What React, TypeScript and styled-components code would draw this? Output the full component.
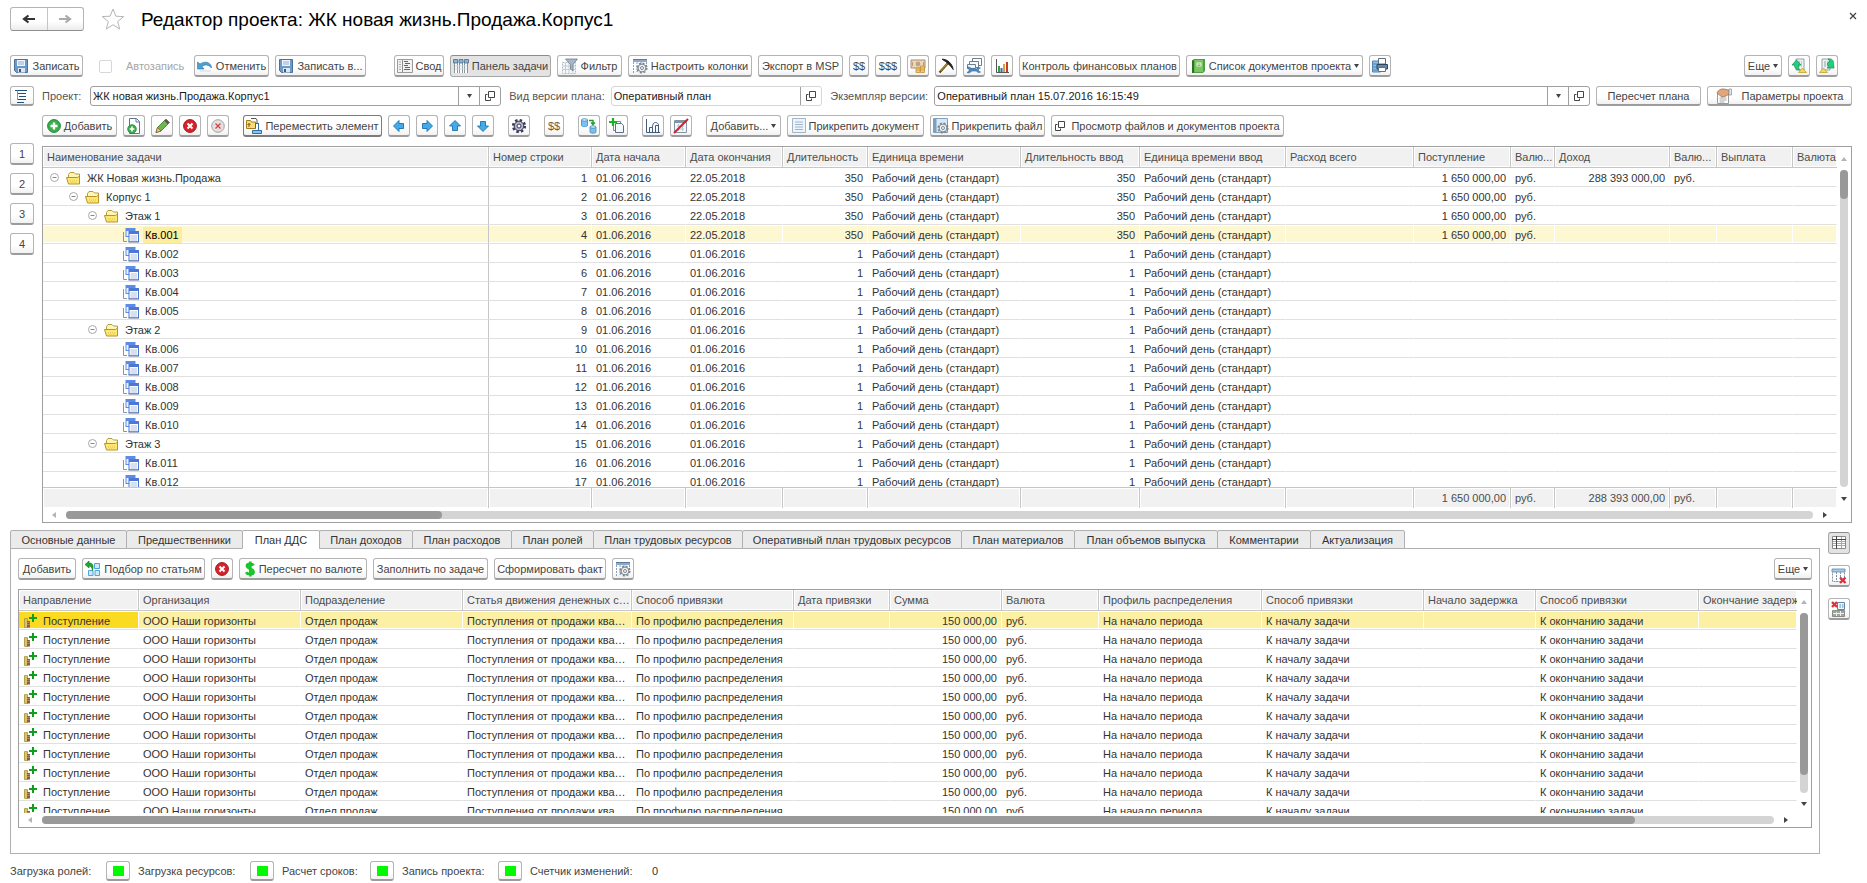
import React from 'react';
import styled, { createGlobalStyle, css } from 'styled-components';

const GlobalStyle = createGlobalStyle`
  * { box-sizing: border-box; }
  body {
    margin: 0;
    background: #fff;
    color: #333;
    font: 11px/14px "Liberation Sans", Arial, sans-serif;
  }
  button, input { font: inherit; color: inherit; margin: 0; }
  svg { display: block; flex: none; }
`;

/* ---------- layout ---------- */

const Page = styled.main`
  display: flex;
  flex-direction: column;
  padding: 7px 15px 0 10px;
`;

const TitleBar = styled.header`
  display: flex;
  align-items: center;
  height: 24px;
`;

const NavGroup = styled.div`
  display: flex;
  height: 24px;
  width: 74px;
  border: 1px solid #b4b4b4;
  border-bottom-color: #8f8f8f;
  border-radius: 3px;
  background: linear-gradient(#fff 60%, #ececec);
`;

const NavButton = styled.button`
  flex: 1;
  display: flex;
  align-items: center;
  justify-content: center;
  border: 0;
  padding: 0;
  background: none;
  & + & { border-left: 1px solid #c4c4c4; }
`;

const PlainButton = styled.button`
  display: flex;
  align-items: center;
  justify-content: center;
  border: 0;
  padding: 0;
  background: none;
`;

const Star = styled(PlainButton)`
  margin: 0 16px 0 17px;
`;

const Title = styled.h1`
  margin: 2px 0 0;
  font-size: 19px;
  line-height: 24px;
  font-weight: 400;
  color: #000;
`;

const CloseButton = styled(PlainButton)`
  width: 12px;
  height: 12px;
  margin: 0 -7px 6px auto;
`;

const Toolbar = styled.div<{ $top: number; $left?: number; $right?: number }>`
  display: flex;
  align-items: center;
  gap: 6px;
  margin-top: ${(p) => p.$top}px;
  padding-left: ${(p) => p.$left ?? 0}px;
  padding-right: ${(p) => p.$right ?? 0}px;
`;

const Gap = styled.span<{ $w: number }>`
  flex: 0 0 ${(p) => p.$w}px;
`;

const Spring = styled.span`
  flex: 1;
`;

const ToolButton = styled.button<{ $w: number; $pressed?: boolean; $strong?: boolean; $low?: boolean }>`
  flex: 0 0 auto;
  display: flex;
  align-items: center;
  justify-content: center;
  gap: 3px;
  width: ${(p) => p.$w}px;
  height: ${(p) => (p.$low ? 20 : 22)}px;
  padding: 0;
  border: 1px solid #b4b4b4;
  border-bottom: 2px solid #9c9c9c;
  border-radius: 3px;
  background: linear-gradient(#fff 60%, #f1f1f1);
  color: #444;
  white-space: nowrap;
  ${(p) => p.$strong && css`border-color: #7c7c7c;`}
  ${(p) =>
    p.$pressed &&
    css`
      background: #e3e3e3;
      border-color: #8c8c8c #a8a8a8 #a8a8a8;
      border-bottom-width: 1px;
    `}
`;

const Money = styled.span`
  color: #6b5a3c;
`;

const AutoSave = styled.label`
  display: flex;
  align-items: center;
  gap: 14px;
  width: 99px;
  padding-left: 10px;
  color: #a6a6a6;
`;

const CheckBox = styled.input`
  appearance: none;
  flex: none;
  width: 13px;
  height: 13px;
  border: 1px solid #d6d6d6;
  border-radius: 2px;
  background: #fff;
`;

const FieldLabel = styled.label<{ $w: number }>`
  flex: 0 0 ${(p) => p.$w}px;
  padding-left: 2px;
  color: #555;
  white-space: nowrap;
`;

const FieldBox = styled.div<{ $grow: number; $pale?: boolean }>`
  flex: ${(p) => p.$grow} 1 0;
  display: flex;
  min-width: 60px;
  height: 20px;
  border: 1px solid ${(p) => (p.$pale ? '#d6d6d6' : '#9f9f9f')};
  border-radius: 3px;
`;

const FieldInput = styled.input`
  flex: 1;
  min-width: 0;
  border: 0;
  padding: 0 2px;
  background: none;
  color: #1a1a1a;
  outline: 0;
`;

const FieldButton = styled(PlainButton)`
  width: 21px;
  border-left: 1px solid #9f9f9f;
`;

/* ---------- grids ---------- */

const Workspace = styled.section`
  display: flex;
  align-items: flex-start;
  gap: 8px;
  margin-top: 6px;
`;

const LevelButtons = styled.nav`
  display: flex;
  flex-direction: column;
  gap: 8px;
`;

const GridFrame = styled.div<{ $top: number }>`
  flex: 1;
  min-width: 0;
  margin-top: ${(p) => p.$top}px;
  border: 1px solid #9f9f9f;
`;

const GridArea = styled.div`
  display: flex;
`;

const GridContent = styled.div`
  flex: 1;
  min-width: 0;
`;

const RowsClip = styled.div<{ $h: number }>`
  height: ${(p) => p.$h}px;
  overflow: hidden;
`;

const Table = styled.table`
  width: 100%;
  table-layout: fixed;
  border-collapse: separate;
  border-spacing: 0;
`;

const headCell = css`
  height: 21px;
  padding: 0 4px;
  overflow: hidden;
  background: #f1f1f1;
  box-shadow: inset 0 0 0 1px #fff;
  border-right: 1px solid #c6c6c6;
  color: #4d4d4d;
  font-weight: 400;
  line-height: 14px;
  white-space: nowrap;
  text-overflow: ellipsis;
  &:last-child { border-right: 0; text-overflow: clip; }
`;

const HeadCell = styled.th`
  ${headCell}
  padding-right: 0;
  text-align: left;
  border-bottom: 1px solid #c6c6c6;
`;

const TotalCell = styled.td<{ $right?: boolean }>`
  ${headCell}
  text-align: ${(p) => (p.$right ? 'right' : 'left')};
  border-top: 1px solid #c6c6c6;
`;

const Cell = styled.td<{ $right?: boolean; $fill?: string; $divider?: boolean }>`
  height: 19px;
  padding: 1px 4px 0;
  overflow: hidden;
  border-bottom: 1px solid #e0e0e0;
  border-right: 1px solid ${(p) => (p.$divider ? '#c6c6c6' : 'transparent')};
  line-height: 14px;
  white-space: nowrap;
  text-overflow: ellipsis;
  text-align: ${(p) => (p.$right ? 'right' : 'left')};
  ${(p) =>
    p.$fill &&
    css`
      background: ${p.$fill} padding-box;
      box-shadow: inset 0 1px #fff, inset 0 -1px #fff;
    `}
`;

const TreeLine = styled.div<{ $level: number }>`
  display: flex;
  align-items: center;
  height: 17px;
  padding-left: ${(p) => p.$level * 19 + 3}px;
`;

const Toggle = styled(PlainButton)`
  width: 9px;
  margin-right: 7px;
`;

const ToggleSpace = styled.span`
  width: 16px;
`;

const TreeText = styled.span<{ $active?: boolean }>`
  margin-left: 4px;
  padding: 1px 3px 0 2px;
  line-height: 15px;
  ${(p) => p.$active && css`background: #fcee9e; color: #000;`}
`;

const DirectionLine = styled.div`
  display: flex;
  align-items: center;
  gap: 6px;
  height: 17px;
`;

const VerticalBar = styled.div`
  display: flex;
  flex-direction: column;
  align-items: center;
  justify-content: space-between;
  width: 14px;
  padding: 9px 0 6px;
`;

const VerticalTrack = styled.div<{ $bottom: number }>`
  flex: 1;
  width: 8px;
  margin: 8px 0 ${(p) => p.$bottom}px;
  border-radius: 4px;
  background: #d4d4d4;
`;

const VerticalThumb = styled.div<{ $h: number }>`
  height: ${(p) => p.$h}%;
  border-radius: 4px;
  background: #999;
`;

const HorizontalBar = styled.div<{ $right: number }>`
  display: flex;
  align-items: center;
  gap: 9px;
  height: 14px;
  padding: 0 ${(p) => p.$right}px 0 8px;
`;

const HorizontalTrack = styled.div`
  flex: 1;
  height: 8px;
  border-radius: 4px;
  background: #d4d4d4;
`;

const HorizontalThumb = styled.div<{ $w: number }>`
  width: ${(p) => p.$w}%;
  height: 8px;
  border-radius: 4px;
  background: #999;
`;

/* ---------- lower panel ---------- */

const Lower = styled.section`
  display: flex;
  gap: 8px;
  margin-top: 7px;
  padding-right: 2px;
`;

const LowerMain = styled.div`
  flex: 1;
  min-width: 0;
`;

const Tabs = styled.div`
  display: flex;
`;

const Tab = styled.button<{ $w: number; $active?: boolean }>`
  width: ${(p) => p.$w + 1}px;
  height: 19px;
  margin: 0 -1px -1px 0;
  padding: 0;
  border: 1px solid #b0b0b0;
  border-radius: 2px 2px 0 0;
  background: #ebebeb;
  color: #333;
  white-space: nowrap;
  ${(p) => p.$active && css`background: #fff; border-bottom-color: #fff;`}
`;

const Panel = styled.div`
  padding: 9px 7px 25px;
  border: 1px solid #b0b0b0;
`;

const SideButtons = styled.nav`
  display: flex;
  flex-direction: column;
  gap: 11px;
  padding-top: 2px;
`;

const StatusBar = styled.footer`
  display: flex;
  align-items: center;
  margin-top: 7px;
`;

const StatusLabel = styled.span<{ $w: number }>`
  width: ${(p) => p.$w}px;
  color: #444;
`;

const StatusButton = styled(ToolButton)`
  margin-right: 8px;
`;

/* ---------- icons ---------- */

const Svg = ({ w = 16, h = 16, children }: { w?: number; h?: number; children: React.ReactNode }) => (
  <svg width={w} height={h} viewBox={`0 0 ${w} ${h}`} fill="none" aria-hidden="true">
    {children}
  </svg>
);

const ArrowNav = ({ color, flip }: { color: string; flip?: boolean }) => (
  <Svg w={16} h={12}>
    <path d={flip ? 'M2 6h10M8.500 2.500 13 6l-4.500 3.500' : 'M14 6H4M7.500 2.500 3 6l4.500 3.500'} stroke={color} strokeWidth="2.2" />
  </Svg>
);
const StarIcon = () => (
  <Svg w={24} h={22}>
    <path d="M12 1l2.900 7.200 7.800.4-6 4.900 2 7.500-6.700-4.200L5.300 21l2-7.500-6-4.900 7.800-.4z" stroke="#b5b5b5" strokeWidth="1" />
  </Svg>
);
const CloseIcon = () => (
  <Svg w={8} h={8}>
    <path d="M1 1l6 6M7 1 1 7" stroke="#444" strokeWidth="1.3" />
  </Svg>
);
const Caret = ({ color = '#444' }: { color?: string }) => (
  <Svg w={5} h={4}>
    <path d="M0 0h5L2.500 4z" fill={color} />
  </Svg>
);
const SaveIcon = () => (
  <Svg>
    <path d="M1.500 1.500h13v13h-11l-2-2z" fill="#6b9ac8" stroke="#4c7299" />
    <path d="M4 2h8v6H4z" fill="#eef4fa" />
    <path d="M5 4h6M5 6h6" stroke="#8fb0d0" />
    <path d="M5 10h7v4.500H5z" fill="#dce6f0" />
    <path d="M6 11h2v3H6z" fill="#3c5878" />
  </Svg>
);
const UndoIcon = () => (
  <Svg>
    <path d="M.5 4v7h6.500L5 8.500C8 6 11.500 6.500 14.500 10 14.500 5 9 2 3 6z" fill="#4f9fd2" stroke="#2a78ad" strokeWidth=".6" />
    <path d="M3 13h11" stroke="#d9e6f0" strokeWidth="1.500" />
  </Svg>
);
const SummaryIcon = () => (
  <Svg>
    <path d="M.5 1.500h15v13H.5z" fill="#f4f2f0" stroke="#9a9a9a" />
    <path d="M5.500 2v12" stroke="#8d8d8d" />
    <path d="M2 4h2M2 6.500h2M2 9h2M2 11.500h2" stroke="#aaa" />
    <path d="M7 3.500h4M8 5.500h5M7 7.500h4M8 9.500h5M7 11.500h6" stroke="#8a5a3c" />
  </Svg>
);
const PanelIcon = () => (
  <Svg>
    <path d="M1 5h14v10H1z" fill="#fff" />
    <path d="M1.500 5v10M4.500 5v10M6.500 5v10M9.500 5v10M11.500 5v10M14.500 5v10" stroke="#8694a0" />
    <path d="M.5 1.500h4V5h-4zM6 1.500h4V5H6zM11.500 1.500h4V5h-4z" fill="#8fb2d2" stroke="#4a6d90" strokeWidth=".8" />
    <path d="M2 8h12M2 11h12" stroke="#cdd5dc" />
  </Svg>
);
const FilterIcon = () => (
  <Svg>
    <path d="M.5 4.500h13v11H.5z" fill="#f6f8fa" stroke="#b4bdc6" strokeDasharray="2 1" />
    <path d="M3.500 5v10M7 5v10M11 5v10M1 8h12M1 11.500h12" stroke="#c3ccd4" />
    <path d="M3.500 1h12L11 6.500V13L8.500 11V6.500z" fill="#a9b7c4" stroke="#6c7f92" strokeWidth=".8" />
  </Svg>
);
const ColumnsIcon = () => (
  <Svg>
    <path d="M1 2.500h14" stroke="#8ea8c8" strokeWidth="3" />
    <path d="M1 1.500h14" stroke="#5b7ba4" />
    <path d="M1.500 4v11M5 4v10M9 4v3M14.500 4v3" stroke="#8ba0ba" strokeDasharray="2 1" />
    <circle cx="10" cy="10" r="4.600" stroke="#7d868f" strokeWidth="2" strokeDasharray="2 1.600" />
    <circle cx="10" cy="10" r="3.900" fill="#f0f2f4" stroke="#7d868f" />
    <circle cx="10" cy="10" r="1.500" fill="#fff" stroke="#7d868f" />
  </Svg>
);
const CashIcon = () => (
  <Svg>
    <path d="M1 2h14v8H1z" fill="#ecd9bd" stroke="#a88c68" />
    <circle cx="8" cy="6" r="2.400" fill="#c0a280" />
    <path d="M2.500 4v4M13.500 4v4" stroke="#b89c78" />
    <path d="M6 10h4v4.500H6zM10.500 8h4v6.500h-4z" fill="#f7cd74" stroke="#c2923c" strokeWidth=".8" />
    <path d="M6 12h4M10.500 10h4M10.500 12h4" stroke="#c2923c" strokeWidth=".7" />
  </Svg>
);
const PickIcon = () => (
  <Svg>
    <path d="M11 4 1.500 14.500" stroke="#5a4310" strokeWidth="2.200" />
    <path d="M10.500 4.500 2.500 13.200" stroke="#e3c23c" strokeWidth=".8" />
    <path d="M4 1.200C9 1 14 5 15.200 11.500 12.500 7.500 9 4 4 1.200z" fill="#222" stroke="#222" />
  </Svg>
);
const WrenchIcon = () => (
  <Svg>
    <path d="M6.500.5h9v7h-9z" fill="#fff" stroke="#6c7f92" />
    <path d="M3.500 3.500h9v6h-9z" fill="#fff" stroke="#6c7f92" />
    <path d="M1.500 6.500h8v4h-8z" fill="#f2f6fa" stroke="#6c7f92" />
    <path d="M1 9.500c1.500-1 4 0 4.500 1.500h5c.8-1.500 2.800-2 4-1l-2 1v2l2 1c-1.500 1-3.500.4-4-1h-5C5 14.500 2.500 15.500 1 14.500l2-1.200v-2.400z" fill="#4f8fc8" stroke="#2f6a9f" strokeWidth=".6" />
  </Svg>
);
const ChartIcon = () => (
  <Svg>
    <path d="M2.500 1v13.500H15" stroke="#555" />
    <path d="M4 8h2v6H4z" fill="#3a9b4a" />
    <path d="M6.500 10h2v4h-2z" fill="#3a66b8" />
    <path d="M9 6h2v8H9z" fill="#d8a13a" />
    <path d="M12 4h2v10h-2z" fill="#c8382e" />
  </Svg>
);
const BookIcon = () => (
  <Svg>
    <path d="M2 2.500 4 1h11v12l-2 2H2z" fill="#4f9f44" />
    <path d="M4.500 2h8.500v12H4.500z" fill="#7cc662" />
    <path d="M2 2.500h2V15H2z" fill="#2e7226" />
    <path d="M6.500 4.500h5v4h-5z" fill="#e8f5e2" />
    <path d="M7.500 6h3M7.500 7.500h3" stroke="#6aa858" strokeWidth=".8" />
  </Svg>
);
const PrinterIcon = () => (
  <Svg>
    <path d="M.5 3h8v11h-8z" fill="#8fbce2" stroke="#4f84b4" />
    <path d="M0 6h6M0 9h6M0 12h6" stroke="#4f84b4" />
    <path d="M6.500.5h7V6h-7z" fill="#fff" stroke="#5c7084" />
    <path d="M5 6.500h10.500v4.500H5z" fill="#6485a6" stroke="#2c4661" />
    <path d="M6.500 9.500h7v4h-7z" fill="#fff" stroke="#5c7084" />
  </Svg>
);
const DocUpIcon = () => (
  <Svg>
    <path d="M5 1h8v11H5z" fill="#eef2f5" stroke="#8fa0ae" />
    <path d="M7 4h4M7 6h4M7 8h4" stroke="#8fa0ae" strokeDasharray="2 1" />
    <path d="M5.500 2 1 7h2.500c0 3 1.500 4.500 5 5C7.500 10 7.500 9 7.500 7H10z" fill="#22d07c" stroke="#148a50" strokeWidth=".7" />
    <path d="M11.500 10 7.500 14.500h8z" fill="#f3dc4e" stroke="#b89a1c" strokeWidth=".7" />
  </Svg>
);
const DocDownIcon = () => (
  <Svg>
    <path d="M3 1h8v11H3z" fill="#eef2f5" stroke="#8fa0ae" />
    <path d="M5 4h4M5 6h4M5 8h4" stroke="#8fa0ae" strokeDasharray="2 1" />
    <path d="M9 1c4-.5 5.500 1 5.500 4.500l.5 4.500H8l2-1.500C7.500 7 8 4 11 3.500z" fill="#22d07c" stroke="#148a50" strokeWidth=".7" />
    <path d="M4.500 10 .5 14.500h8z" fill="#f3dc4e" stroke="#b89a1c" strokeWidth=".7" />
  </Svg>
);
const GanttIcon = () => (
  <Svg>
    <path d="M1 2.500h12M4 5.500h8M5 8.500h7M4 11.500h8M3 14.500h7" stroke="#1f4e79" />
    <path d="M3.500 2v10" stroke="#5c82a4" strokeWidth=".8" />
  </Svg>
);
const OpenIcon = () => (
  <Svg w={10} h={10}>
    <path d="M3.500.5h6v6h-6z" stroke="#444" />
    <path d="M2.500 3.500h-2v6h5v-2" stroke="#444" />
  </Svg>
);
const HandIcon = () => (
  <Svg>
    <path d="M1.500 5.500h11v10h-11z" fill="#fff" stroke="#9a9a9a" />
    <path d="M3.500 10h7M3.500 12h7M3.500 14h5" stroke="#a9a9a9" />
    <path d="M1 5c1-3 4-4.500 7-4l5 1v4l-3 2-4 1-2-1.500z" fill="#e0a67c" stroke="#9c6844" strokeWidth=".7" />
    <path d="M13 1h2.500v6H13z" fill="#dfe8f0" stroke="#7c93a8" strokeWidth=".7" />
  </Svg>
);
const AddIcon = () => (
  <Svg w={14} h={14}>
    <circle cx="7" cy="7" r="6.400" fill="#3bae4c" stroke="#1f8a34" />
    <path d="M7 3.500v7M3.500 7h7" stroke="#fff" strokeWidth="2.400" />
  </Svg>
);
const AddDocIcon = () => (
  <Svg>
    <path d="M3.500.5h7l3 3v12h-10z" fill="#fff" stroke="#5c7690" />
    <path d="M10 1v3h3.500" stroke="#5c7690" />
    <circle cx="6" cy="11" r="4.300" fill="#3bae4c" stroke="#1f8a34" strokeWidth=".8" />
    <path d="M6 8.600v4.800M3.600 11h4.800" stroke="#fff" strokeWidth="1.600" />
  </Svg>
);
const PencilIcon = () => (
  <Svg>
    <path d="M2 14.500 3.500 9.500 10.500 2.500l3.500 3.500-7 7z" fill="#6cb84c" stroke="#3c7a26" strokeWidth=".8" />
    <path d="m2 14.500 1.500-5 3.500 3.500z" fill="#f0c88c" stroke="#6e4a1c" strokeWidth=".6" />
    <path d="m10.500 2.500 1.500-1.500 3.500 3.500L14 6z" fill="#555" stroke="#7a4a2c" strokeWidth=".6" />
  </Svg>
);
const DeleteIcon = () => (
  <Svg w={14} h={14}>
    <circle cx="7" cy="7" r="6.400" fill="#d8232a" stroke="#a3161c" />
    <path d="m4.500 4.500 5 5M9.500 4.500l-5 5" stroke="#fff" strokeWidth="2" />
  </Svg>
);
const DeleteGrayIcon = () => (
  <Svg w={14} h={14}>
    <circle cx="7" cy="7" r="6.300" fill="#e2e2e2" stroke="#a2a2a2" />
    <path d="m4.500 4.500 5 5M9.500 4.500l-5 5" stroke="#e23a3a" strokeWidth="1.200" />
  </Svg>
);
const MoveIcon = () => (
  <Svg>
    <path d="M.5 2.500h4l1 1.500h4v6.500h-9z" fill="#f9dc74" stroke="#a67c1c" />
    <path d="M5 .5h5l1 1.500v3" stroke="#555" />
    <path d="M3 9V5.500M1.500 7 3 5.500 4.500 7" stroke="#6e5312" />
    <path d="M12.500 5v7M12.500 5.500h-3v5" stroke="#2c6fa8" />
    <path d="M6.500 12.500h9v3h-9z" fill="#8cc2ec" stroke="#2c6fa8" />
  </Svg>
);
const BlueArrow = ({ turn }: { turn: number }) => (
  <Svg w={14} h={14}>
    <path transform={`rotate(${turn} 7 7)`} d="M1.500 7 7 1.500v3h4.500v5H7v3z" fill="#43ace8" stroke="#1d6fae" strokeWidth=".9" />
  </Svg>
);
const GearIcon = () => (
  <Svg>
    <circle cx="8" cy="8" r="5.800" stroke="#3a3a55" strokeWidth="2.600" strokeDasharray="2.400 2.150" />
    <circle cx="8" cy="8" r="4.800" fill="#b4b4cc" stroke="#3a3a55" />
    <circle cx="8" cy="8" r="2" fill="#fff" stroke="#3a3a55" />
  </Svg>
);
const TransferIcon = () => (
  <Svg>
    <path d="M.5 2v5.500c0 1.500 6 1.500 6 0V2z" fill="#7cc2f0" stroke="#3c88c4" strokeWidth=".8" />
    <ellipse cx="3.500" cy="2" rx="3" ry="1.300" fill="#cfe9fb" stroke="#3c88c4" strokeWidth=".8" />
    <path d="M9 9v5c0 1.500 6 1.500 6 0V9z" fill="#7cc2f0" stroke="#3c88c4" strokeWidth=".8" />
    <ellipse cx="12" cy="9" rx="3" ry="1.300" fill="#cfe9fb" stroke="#3c88c4" strokeWidth=".8" />
    <path d="M8 2.500h4v3M10 4.500l2 2 2-2" stroke="#1d9a2e" strokeWidth="1.400" />
  </Svg>
);
const CopyPlusIcon = () => (
  <Svg>
    <path d="M4.500 3.500h7v9h-7z" fill="#fff" stroke="#7c8c9c" />
    <path d="M6.500 5.500h6l2 2v7h-8z" fill="#f6f9fb" stroke="#5c7084" />
    <path d="M4 0v8M0 4h8" stroke="#18b428" strokeWidth="2.200" />
  </Svg>
);
const CurveIcon = () => (
  <Svg>
    <path d="M1.500 1v13.500H15" stroke="#3f5d7a" />
    <path d="M4.500 14V9.500H7.500V14M7.500 9.500C7.500 6 8.500 4.500 10.500 4.500s2.500 1.500 3 2V14M10.500 14V7.500h3" stroke="#3f5d7a" />
  </Svg>
);
const NoCalendarIcon = () => (
  <Svg>
    <path d="M1.500 2.500h12v12h-12z" fill="#f4f6f8" stroke="#8494a4" />
    <path d="M1.500 4h12" stroke="#8494a4" strokeWidth="2" />
    <path d="M4 8h7M4 11h7M5.500 6v7M9.500 6v7" stroke="#b9c6d2" />
    <path d="M15 1 1 15" stroke="#e01b24" strokeWidth="2" />
  </Svg>
);
const DocumentIcon = () => (
  <Svg w={14} h={15}>
    <path d="M.5.5h13v14H.5z" fill="#eef4fa" stroke="#9fb6cc" />
    <path d="M3 4h8M3 6.500h8M3 9h8M3 11.500h8" stroke="#9fb6cc" />
  </Svg>
);
const FileGearIcon = () => (
  <Svg>
    <path d="M.5.500h14v14H.5z" fill="#dbe8f4" stroke="#7ca0c2" />
    <path d="M.5.500h3v14h-3z" fill="#7ca0c2" />
    <circle cx="10" cy="10" r="4.600" stroke="#7d868f" strokeWidth="2" strokeDasharray="2 1.600" />
    <circle cx="10" cy="10" r="3.900" fill="#f0f2f4" stroke="#7d868f" />
    <circle cx="10" cy="10" r="1.500" fill="#fff" stroke="#7d868f" />
  </Svg>
);
const PickItemsIcon = () => (
  <Svg>
    <path d="M9.500 2.500h5v5h-5zM3.500 9.500h4.500v5H3.500zM10 9.500h4.500v5H10z" fill="#cfe8fa" stroke="#4fa3de" />
    <path d="M4 0 0 3.500 4 7V5c2 0 3 1.500 3.500 4.500C9 4 7.500 2 4 2z" fill="#1fa82e" stroke="#14701e" strokeWidth=".6" />
  </Svg>
);
const DollarIcon = () => (
  <Svg w={12}>
    <path d="M9.500 4.500C8.500 2.500 3 2.300 3 5s6.500 3 6.500 6-6 2.700-7.500.3M6.300.5v15" stroke="#18c428" strokeWidth="2.800" />
  </Svg>
);
const FolderIcon = () => (
  <Svg w={15} h={14}>
    <path d="M2.500 3.500 4 1.500h4l1.500 1.500h4v8h-11z" fill="#fdf6b8" stroke="#b49a3c" />
    <path d="M.5 6.500h11l2-1.500v8H2.500z" fill="#fce870" stroke="#b4942c" />
    <path d="M4 10h7M5 12h6" stroke="#e6b848" strokeDasharray="1 1" />
  </Svg>
);
const TaskIcon = () => (
  <Svg>
    <path d="M.5 5v9.500H4" stroke="#8094b4" />
    <path d="M2.500 1h10v9h-10z" fill="#5c8ce8" />
    <path d="M3.500 4h8v5h-8z" fill="#eef3fb" />
    <path d="M5.500 4H16v11H5.500z" fill="#4a78d4" />
    <path d="M6.500 7H15v7.500H6.500z" fill="#fafbfe" />
    <path d="M7.500 9h6.500M7.500 11h6.500M7.500 13h6.500" stroke="#b4c4e4" />
    <path d="M5.500 15h10.500" stroke="#5a6f94" />
  </Svg>
);
const MinusIcon = () => (
  <Svg w={9} h={9}>
    <circle cx="4.500" cy="4.500" r="4" fill="#fff" stroke="#a8a8a8" />
    <path d="M2.500 4.500h4" stroke="#888" />
  </Svg>
);
const IncomeIcon = () => (
  <Svg w={14} h={14}>
    <path d="M1.500 4.500h3v9h-3z" fill="#ecd980" stroke="#a8943c" strokeWidth=".8" />
    <path d="M1 6h4M1 8h4M1 10h4M1 12h4" stroke="#a8943c" strokeWidth=".6" />
    <path d="M4 7h3v6.500H4z" fill="#8c5c3c" />
    <path d="M4 8.500h3M4 10.500h3" stroke="#c89a6c" strokeWidth=".7" />
    <path d="M10 0v8M6 4h8" stroke="#0ca01c" strokeWidth="2" />
  </Svg>
);
const TriangleIcon = ({ d, color }: { d: string; color: string }) => (
  <Svg w={6} h={6}>
    <path d={d} fill={color} />
  </Svg>
);
const TableIcon = () => (
  <Svg>
    <path d="M1.500 1.500h13v12h-13z" fill="#fff" stroke="#8a8a8a" />
    <path d="M2 4.500h12M2 6.500h12M2 8.500h12M2 10.500h12M10.500 2v11" stroke="#a8a8a8" />
    <path d="M5.500 1v13M1 4.500h14" stroke="#444" />
  </Svg>
);
const TableDeleteIcon = () => (
  <Svg>
    <path d="M1.500 1.500h12v12h-12z" fill="#fff" stroke="#7c93a8" strokeDasharray="2 1" />
    <path d="M1 1h13v3H1z" fill="#a5cbe8" stroke="#5c86ac" strokeWidth=".8" />
    <path d="M5.500 4v10M9.500 4v10" stroke="#7c93a8" strokeDasharray="2 1" />
    <path d="m9 9.500 5.500 5.500M14.500 9.500 9 15" stroke="#e0303a" strokeWidth="2.400" />
  </Svg>
);
const CardDeleteIcon = () => (
  <Svg>
    <path d="M6.500 1.500h7v7h-7z" fill="#eef5fb" stroke="#5c86ac" />
    <path d="M8.500 4h1.500M8.500 6h1.500M11 4h1.500M11 6h1.500" stroke="#5c86ac" />
    <path d="M1.500 9.500h12v6h-12z" fill="#a4a4a4" stroke="#8a8a8a" />
    <path d="M2 12.500h11M5.500 10v5M9.500 10v5" stroke="#eee" />
    <path d="M2 10.500h4" stroke="#86c83c" strokeWidth="1.500" />
    <path d="m1 1 5 5M6 1 1 6" stroke="#e0303a" strokeWidth="2.400" />
  </Svg>
);
const GreenSquare = () => (
  <Svg w={11} h={10}>
    <path d="M0 0h11v10H0z" fill="#00f800" />
  </Svg>
);

/* ---------- data ---------- */

const taskColumns: [string, number][] = [
  ['Наименование задачи', 446], ['Номер строки', 103], ['Дата начала', 94], ['Дата окончания', 97],
  ['Длительность', 85], ['Единица времени', 153], ['Длительность ввод', 119], ['Единица времени ввод', 146],
  ['Расход всего', 128], ['Поступление', 97], ['Валю...', 44], ['Доход', 115], ['Валю...', 47], ['Выплата', 76], ['Валюта', 0],
];
const rightTaskColumns = [1, 4, 6, 8, 9, 11, 13];

const tasks: { name: string; level: number }[] = [
  { name: 'ЖК Новая жизнь.Продажа', level: 0 },
  { name: 'Корпус 1', level: 1 },
  { name: 'Этаж 1', level: 2 },
  ...['001', '002', '003', '004', '005'].map((n) => ({ name: `Кв.${n}`, level: 3 })),
  { name: 'Этаж 2', level: 2 },
  ...['006', '007', '008', '009', '010'].map((n) => ({ name: `Кв.${n}`, level: 3 })),
  { name: 'Этаж 3', level: 2 },
  ...['011', '012'].map((n) => ({ name: `Кв.${n}`, level: 3 })),
];

const unit = 'Рабочий день (стандарт)';
const taskValues = (i: number): string[] => {
  const top = i < 4;
  const days = top ? '350' : '1';
  return [
    String(i + 1), '01.06.2016', top ? '22.05.2018' : '01.06.2016', days, unit, days, unit, '',
    top ? '1 650 000,00' : '', top ? 'руб.' : '', i === 0 ? '288 393 000,00' : '', i === 0 ? 'руб.' : '', '', '',
  ];
};
const totals = ['', '', '', '', '', '', '', '', '', '1 650 000,00', 'руб.', '288 393 000,00', 'руб.', '', ''];

const planColumns: [string, number][] = [
  ['Направление', 120], ['Организация', 162], ['Подразделение', 162], ['Статья движения денежных средств', 169],
  ['Способ привязки', 162], ['Дата привязки', 96], ['Сумма', 112], ['Валюта', 97], ['Профиль распределения', 163],
  ['Способ привязки', 162], ['Начало задержка', 112], ['Способ привязки', 163], ['Окончание задержка', 0],
];
const planValues = [
  'ООО Наши горизонты', 'Отдел продаж', 'Поступления от продажи квартир', 'По профилю распределения', '',
  '150 000,00', 'руб.', 'На начало периода', 'К началу задачи', '', 'К окончанию задачи', '',
];

const tabs: [string, number][] = [
  ['Основные данные', 116], ['Предшественники', 116], ['План ДДС', 77], ['План доходов', 93], ['План расходов', 99],
  ['План ролей', 82], ['План трудовых ресурсов', 149], ['Оперативный план трудовых ресурсов', 219],
  ['План материалов', 113], ['План объемов выпуска', 143], ['Комментарии', 93], ['Актуализация', 94],
];

const statuses: [string, number][] = [
  ['Загрузка ролей:', 96], ['Загрузка ресурсов:', 112], ['Расчет сроков:', 88], ['Запись проекта:', 96],
];

const Columns = ({ cols }: { cols: [string, number][] }) => (
  <colgroup>
    {cols.map(([, w], i) => (
      <col key={i} width={w || undefined} />
    ))}
  </colgroup>
);

const VScroll = ({ thumb, bottom }: { thumb: number; bottom: number }) => (
  <VerticalBar>
    <TriangleIcon d="M3 1l3 4H0z" color="#b4b4b4" />
    <VerticalTrack $bottom={bottom}>
      <VerticalThumb $h={thumb} />
    </VerticalTrack>
    <TriangleIcon d="M0 1h6L3 5z" color="#444" />
  </VerticalBar>
);

const HScroll = ({ thumb, right }: { thumb: number; right: number }) => (
  <HorizontalBar $right={right}>
    <TriangleIcon d="M5 0v6L1 3z" color="#b4b4b4" />
    <HorizontalTrack>
      <HorizontalThumb $w={thumb} />
    </HorizontalTrack>
    <TriangleIcon d="M1 0v6l4-3z" color="#444" />
  </HorizontalBar>
);

const TaskGrid = () => (
  <GridFrame $top={3}>
    <GridArea>
      <GridContent>
        <RowsClip $h={340}>
          <Table>
            <Columns cols={taskColumns} />
            <thead>
              <tr>{taskColumns.map(([name], i) => <HeadCell key={i}>{name}</HeadCell>)}</tr>
            </thead>
            <tbody>
              {tasks.map((t, i) => {
                const fill = i === 3 ? '#fdf7d2' : undefined;
                return (
                  <tr key={t.name}>
                    <Cell $divider $fill={fill}>
                      <TreeLine $level={t.level}>
                        {t.level < 3 ? <Toggle aria-label="Свернуть"><MinusIcon /></Toggle> : <ToggleSpace />}
                        {t.level < 3 ? <FolderIcon /> : <TaskIcon />}
                        <TreeText $active={i === 3}>{t.name}</TreeText>
                      </TreeLine>
                    </Cell>
                    {taskValues(i).map((v, j) => (
                      <Cell key={j} $right={rightTaskColumns.includes(j + 1)} $fill={fill}>{v}</Cell>
                    ))}
                  </tr>
                );
              })}
            </tbody>
          </Table>
        </RowsClip>
        <Table>
          <Columns cols={taskColumns} />
          <tbody>
            <tr>{totals.map((v, i) => <TotalCell key={i} $right={rightTaskColumns.includes(i)}>{v}</TotalCell>)}</tr>
          </tbody>
        </Table>
      </GridContent>
      <VScroll thumb={9} bottom={9} />
    </GridArea>
    <HScroll thumb={21.5} right={23} />
  </GridFrame>
);

const PlanGrid = () => (
  <GridFrame $top={9}>
    <GridArea>
      <GridContent>
        <RowsClip $h={223}>
          <Table>
            <Columns cols={planColumns} />
            <thead>
              <tr>{planColumns.map(([name], i) => <HeadCell key={i}>{name}</HeadCell>)}</tr>
            </thead>
            <tbody>
              {Array.from({ length: 11 }, (_, i) => (
                <tr key={i}>
                  <Cell $fill={i === 0 ? '#fbda22' : undefined}>
                    <DirectionLine><IncomeIcon />Поступление</DirectionLine>
                  </Cell>
                  {planValues.map((v, j) => (
                    <Cell key={j} $right={j === 5} $fill={i === 0 ? '#fcf0a4' : undefined}>{v}</Cell>
                  ))}
                </tr>
              ))}
            </tbody>
          </Table>
        </RowsClip>
      </GridContent>
      <VScroll thumb={90} bottom={8} />
    </GridArea>
    <HScroll thumb={92} right={22} />
  </GridFrame>
);

export default function App() {
  return (
    <Page>
      <GlobalStyle />
      <TitleBar>
        <NavGroup>
          <NavButton aria-label="Назад"><ArrowNav color="#333" /></NavButton>
          <NavButton aria-label="Вперед"><ArrowNav color="#aaa" flip /></NavButton>
        </NavGroup>
        <Star aria-label="Избранное"><StarIcon /></Star>
        <Title>Редактор проекта: ЖК новая жизнь.Продажа.Корпус1</Title>
        <CloseButton aria-label="Закрыть"><CloseIcon /></CloseButton>
      </TitleBar>

      <Toolbar $top={24} $right={14}>
        <ToolButton $w={73}><SaveIcon />Записать</ToolButton>
        <AutoSave><CheckBox type="checkbox" disabled />Автозапись</AutoSave>
        <ToolButton $w={75}><UndoIcon />Отменить</ToolButton>
        <ToolButton $w={91}><SaveIcon />Записать в...</ToolButton>
        <Gap $w={16} />
        <ToolButton $w={50}><SummaryIcon />Свод</ToolButton>
        <ToolButton $w={101} $pressed><PanelIcon />Панель задачи</ToolButton>
        <ToolButton $w={65}><FilterIcon />Фильтр</ToolButton>
        <ToolButton $w={124}><ColumnsIcon />Настроить колонки</ToolButton>
        <ToolButton $w={85}>Экспорт в MSP</ToolButton>
        <ToolButton $w={20}>$$</ToolButton>
        <ToolButton $w={26}>$$$</ToolButton>
        <ToolButton $w={22} aria-label="Деньги"><CashIcon /></ToolButton>
        <ToolButton $w={22} aria-label="Работы"><PickIcon /></ToolButton>
        <ToolButton $w={22} aria-label="Сервис"><WrenchIcon /></ToolButton>
        <ToolButton $w={22} aria-label="Диаграмма"><ChartIcon /></ToolButton>
        <ToolButton $w={161}>Контроль финансовых планов</ToolButton>
        <ToolButton $w={177}><BookIcon />Список документов проекта<Caret /></ToolButton>
        <ToolButton $w={22} aria-label="Печать"><PrinterIcon /></ToolButton>
        <Spring />
        <ToolButton $w={38}>Еще<Caret /></ToolButton>
        <ToolButton $w={22} aria-label="Выгрузить"><DocUpIcon /></ToolButton>
        <ToolButton $w={22} aria-label="Загрузить"><DocDownIcon /></ToolButton>
      </Toolbar>

      <Toolbar $top={9}>
        <ToolButton $w={24} $low aria-label="Диаграмма Ганта"><GanttIcon /></ToolButton>
        <FieldLabel $w={44} htmlFor="project">Проект:</FieldLabel>
        <FieldBox $grow={412}>
          <FieldInput id="project" defaultValue="ЖК новая жизнь.Продажа.Корпус1" />
          <FieldButton aria-label="Выбрать"><Caret /></FieldButton>
          <FieldButton aria-label="Открыть"><OpenIcon /></FieldButton>
        </FieldBox>
        <FieldLabel $w={92} htmlFor="kind">Вид версии плана:</FieldLabel>
        <FieldBox $grow={211} $pale>
          <FieldInput id="kind" defaultValue="Оперативный план" />
          <FieldButton aria-label="Открыть"><OpenIcon /></FieldButton>
        </FieldBox>
        <FieldLabel $w={100} htmlFor="version">Экземпляр версии:</FieldLabel>
        <FieldBox $grow={658}>
          <FieldInput id="version" defaultValue="Оперативный план 15.07.2016 16:15:49" />
          <FieldButton aria-label="Выбрать"><Caret /></FieldButton>
          <FieldButton aria-label="Открыть"><OpenIcon /></FieldButton>
        </FieldBox>
        <ToolButton $w={105} $low>Пересчет плана</ToolButton>
        <ToolButton $w={145} $low><HandIcon /><Gap $w={4} />Параметры проекта</ToolButton>
      </Toolbar>

      <Toolbar $top={9} $left={32}>
        <ToolButton $w={75}><AddIcon />Добавить</ToolButton>
        <ToolButton $w={22} aria-label="Добавить документ"><AddDocIcon /></ToolButton>
        <ToolButton $w={22} aria-label="Изменить"><PencilIcon /></ToolButton>
        <ToolButton $w={22} aria-label="Удалить"><DeleteIcon /></ToolButton>
        <ToolButton $w={22} aria-label="Пометить на удаление"><DeleteGrayIcon /></ToolButton>
        <Gap $w={2} />
        <ToolButton $w={139} $strong><MoveIcon />Переместить элемент</ToolButton>
        <ToolButton $w={22} aria-label="Влево"><BlueArrow turn={0} /></ToolButton>
        <ToolButton $w={22} aria-label="Вправо"><BlueArrow turn={180} /></ToolButton>
        <ToolButton $w={22} aria-label="Вверх"><BlueArrow turn={90} /></ToolButton>
        <ToolButton $w={22} aria-label="Вниз"><BlueArrow turn={270} /></ToolButton>
        <Gap $w={2} />
        <ToolButton $w={22} aria-label="Настройки"><GearIcon /></ToolButton>
        <Gap $w={2} />
        <ToolButton $w={20}><Money>$$</Money></ToolButton>
        <Gap $w={2} />
        <ToolButton $w={22} aria-label="Перенести данные"><TransferIcon /></ToolButton>
        <ToolButton $w={22} aria-label="Скопировать"><CopyPlusIcon /></ToolButton>
        <Gap $w={2} />
        <ToolButton $w={22} aria-label="График"><CurveIcon /></ToolButton>
        <ToolButton $w={22} aria-label="Очистить календарь"><NoCalendarIcon /></ToolButton>
        <Gap $w={2} />
        <ToolButton $w={75}>Добавить...<Caret /></ToolButton>
        <ToolButton $w={137}><DocumentIcon />Прикрепить документ</ToolButton>
        <ToolButton $w={115}><FileGearIcon />Прикрепить файл</ToolButton>
        <ToolButton $w={233}><OpenIcon /><Gap $w={0} />Просмотр файлов и документов проекта</ToolButton>
      </Toolbar>

      <Workspace>
        <LevelButtons>
          {[1, 2, 3, 4].map((n) => <ToolButton key={n} $w={24}>{n}</ToolButton>)}
        </LevelButtons>
        <TaskGrid />
      </Workspace>

      <Lower>
        <LowerMain>
          <Tabs role="tablist">
            {tabs.map(([name, w]) => (
              <Tab key={name} role="tab" $w={w} $active={name === 'План ДДС'}>{name}</Tab>
            ))}
          </Tabs>
          <Panel>
            <Toolbar $top={0}>
              <ToolButton $w={58}>Добавить</ToolButton>
              <ToolButton $w={123}><PickItemsIcon />Подбор по статьям</ToolButton>
              <ToolButton $w={22} aria-label="Удалить"><DeleteIcon /></ToolButton>
              <ToolButton $w={128}><DollarIcon />Пересчет по валюте</ToolButton>
              <ToolButton $w={115}>Заполнить по задаче</ToolButton>
              <ToolButton $w={112}>Сформировать факт</ToolButton>
              <ToolButton $w={22} aria-label="Настроить колонки"><ColumnsIcon /></ToolButton>
              <Spring />
              <ToolButton $w={38}>Еще<Caret /></ToolButton>
            </Toolbar>
            <PlanGrid />
          </Panel>
        </LowerMain>
        <SideButtons>
          <ToolButton $w={22} $pressed aria-label="Таблица"><TableIcon /></ToolButton>
          <ToolButton $w={22} aria-label="Скрыть таблицу"><TableDeleteIcon /></ToolButton>
          <ToolButton $w={22} aria-label="Скрыть карточку"><CardDeleteIcon /></ToolButton>
        </SideButtons>
      </Lower>

      <StatusBar>
        {statuses.map(([name, w]) => (
          <React.Fragment key={name}>
            <StatusLabel $w={w}>{name}</StatusLabel>
            <StatusButton $w={24} $low aria-label={name}><GreenSquare /></StatusButton>
          </React.Fragment>
        ))}
        <StatusLabel $w={122}>Счетчик изменений:</StatusLabel>
        <span>0</span>
      </StatusBar>
    </Page>
  );
}
